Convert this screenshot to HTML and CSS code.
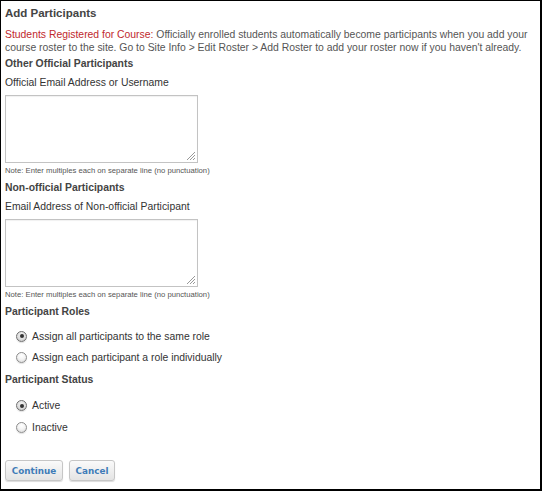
FILE: index.html
```html
<!DOCTYPE html>
<html>
<head>
<meta charset="utf-8">
<link rel="stylesheet" href="styles.css">
</head>
<body>
<div class="frame">
  <h1 class="title">Add Participants</h1>
  <p class="intro"><span class="red">Students Registered for Course:</span> Officially enrolled students automatically become participants when you add your course roster to the site. Go to Site Info &gt; Edit Roster &gt; Add Roster to add your roster now if you haven't already.</p>

  <h2 class="sec sec-first">Other Official Participants</h2>
  <div class="label">Official Email Address or Username</div>
  <div class="ta"><span class="grip"></span></div>
  <div class="note">Note: Enter multiples each on separate line (no punctuation)</div>

  <h2 class="sec">Non-official Participants</h2>
  <div class="label">Email Address of Non-official Participant</div>
  <div class="ta"><span class="grip"></span></div>
  <div class="note">Note: Enter multiples each on separate line (no punctuation)</div>

  <h2 class="sec">Participant Roles</h2>
  <div class="radios">
    <div class="radio-row"><span class="radio checked"></span><span>Assign all participants to the same role</span></div>
    <div class="radio-row"><span class="radio"></span><span>Assign each participant a role individually</span></div>
  </div>

  <h2 class="sec">Participant Status</h2>
  <div class="radios radios-status">
    <div class="radio-row"><span class="radio checked"></span><span>Active</span></div>
    <div class="radio-row"><span class="radio"></span><span>Inactive</span></div>
  </div>

  <div class="buttons">
    <button class="btn btn-continue">Continue</button>
    <button class="btn btn-cancel">Cancel</button>
  </div>
</div>
</body>
</html>
```

FILE: styles.css
```css
html, body {
  margin: 0;
  padding: 0;
  background: #fff;
}
.frame {
  box-sizing: border-box;
  width: 542px;
  height: 491px;
  border-style: solid;
  border-color: #000;
  border-width: 1px 2px 2px 1px;
  padding: 0 1px 0 4px;
  font-family: "Liberation Sans", Arial, sans-serif;
  color: #555;
  overflow: hidden;
}
.title {
  margin: 4px 0 0 0;
  font-size: 11.5px;
  line-height: 16px;
  font-weight: bold;
  color: #444;
}
.intro {
  margin: 6.5px 0 0 0;
  font-size: 10.4px;
  line-height: 13px;
  color: #555;
}
.red {
  color: #c0282d;
}
.sec {
  margin: 5.5px 0 0 0;
  font-size: 10.4px;
  line-height: 14px;
  font-weight: bold;
  color: #444;
}
.sec-first {
  margin-top: 3.5px;
}
.label {
  margin-top: 4.5px;
  font-size: 10.4px;
  line-height: 14px;
  color: #333;
}
.ta {
  position: relative;
  box-sizing: border-box;
  width: 193px;
  height: 68px;
  margin-top: 5.5px;
  border: 1px solid #c3c3c3;
  box-shadow: inset 0 1px 1px rgba(0,0,0,0.06);
  background: #fff;
}
.grip {
  position: absolute;
  right: 2px;
  bottom: 2px;
  width: 8px;
  height: 8px;
  background: linear-gradient(135deg, transparent 0 45%, #999 45% 52%, transparent 52% 66%, #999 66% 73%, transparent 73% 85%, #999 85% 92%, transparent 92%);
}
.note {
  margin-top: 1.5px;
  font-size: 7.7px;
  line-height: 11px;
  color: #555;
}
.radios {
  margin-top: 6.5px;
  padding-left: 11px;
}
.radios-status {
  margin-top: 7.5px;
}
.radio-row {
  display: flex;
  align-items: center;
  gap: 5px;
  height: 21px;
  font-size: 10.4px;
  color: #333;
}
.radios-status .radio-row {
  height: 22px;
}
.radio {
  box-sizing: border-box;
  width: 11px;
  height: 11px;
  border-radius: 50%;
  border: 1px solid #8d8d8d;
  background: radial-gradient(circle at 50% 30%, #ffffff 0%, #f4f4f4 45%, #d6d6d6 100%);
  box-shadow: 0 1px 1px rgba(0,0,0,0.12);
  display: flex;
  align-items: center;
  justify-content: center;
}
.radio.checked {
  background: radial-gradient(circle at 50% 30%, #f0f0f0 0%, #dcdcdc 60%, #bdbdbd 100%);
  border-color: #707070;
}
.radio.checked::after {
  content: "";
  width: 4px;
  height: 4px;
  border-radius: 50%;
  background: #333;
}
.buttons {
  display: flex;
  gap: 6px;
  margin-top: 21.5px;
}
.btn {
  box-sizing: border-box;
  height: 21px;
  padding: 0;
  border: 1px solid #c6c6c6;
  border-radius: 3px;
  background: linear-gradient(#fafafa, #e4e4e4);
  box-shadow: 0 1px 1px rgba(0,0,0,0.15);
  font-family: "DejaVu Sans", Verdana, sans-serif;
  font-weight: bold;
  font-size: 8.8px;
  color: #3f7cb8;
}
.btn-continue {
  width: 58px;
}
.btn-cancel {
  width: 46px;
}
```
